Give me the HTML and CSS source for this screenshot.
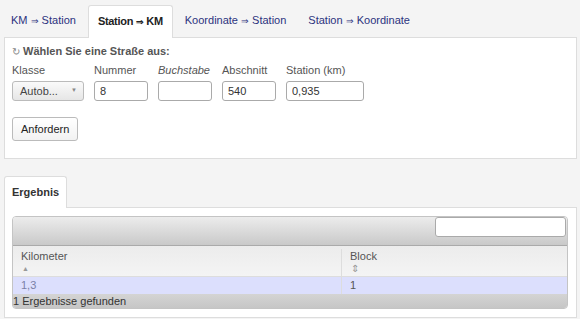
FILE: index.html
```html
<!doctype html>
<html lang="de">
<head>
    <meta charset="UTF-8">
    <title>Station / KM</title>
    <link rel="stylesheet" href="styles.css">
</head>
<body>
    <ul class="tabs top-tabs">
        <li class="tab"><a>KM <span class="arr">&rArr;</span> Station</a></li>
        <li class="tab active"><a>Station <span class="arr">&rArr;</span> KM</a></li>
        <li class="tab"><a>Koordinate <span class="arr">&rArr;</span> Station</a></li>
        <li class="tab"><a>Station <span class="arr">&rArr;</span> Koordinate</a></li>
    </ul>

    <div class="panel query">
        <div class="legend"><span class="refresh">&#x21BB;</span> Wählen Sie eine Straße aus:</div>
        <div class="fields">
            <label class="field">Klasse
                <span class="select"><span>Autob...</span><span class="caret">&#9660;</span></span></label>
            <label class="field">Nummer
                <input class="txt" type="text" value="8"></label>
            <label class="field"><i>Buchstabe</i>
                <input class="txt" type="text" value=""></label>
            <label class="field">Abschnitt
                <input class="txt" type="text" value="540"></label>
            <label class="field">Station (km)
                <input class="txt wide" type="text" value="0,935"></label>
        </div>
        <button class="btn">Anfordern</button>
    </div>

    <ul class="tabs result-tabs">
        <li class="tab active"><a>Ergebnis</a></li>
    </ul>

    <div class="panel result">
        <div class="grid">
            <div class="grid-toolbar">
                <input class="search" type="text">
            </div>
            <div class="grid-row head">
                <div class="cell">Kilometer<div class="sort">&#9650;</div></div>
                <div class="cell">Block<div class="sort both">&#8661;</div></div>
            </div>
            <div class="grid-row data">
                <div class="cell">1,3</div>
                <div class="cell">1</div>
            </div>
            <div class="grid-footer">1 Ergebnisse gefunden</div>
        </div>
    </div>
</body>
</html>
```

FILE: styles.css
```css
body {
    margin: 0;
    padding: 4px 3px 0 4px;
    background-color: #f4f4f4;
    color: #555;
    font: 11px/1.3 "Liberation Sans", Arial, sans-serif;
}

.tabs {
    list-style: none;
    margin: 0;
    padding: 0;
    display: flex;
}

.top-tabs {
    margin-left: -3px;
}

.tab {
    margin-right: 2px;
    border: 1px solid transparent;
    border-bottom: none;
    border-radius: 3px 3px 0 0;
}

.tab a {
    display: block;
    padding: 0 9px;
    line-height: 31px;
    color: #2b327e;
}

.arr {
    font-size: 9px;
}

.tab.active {
    background: #fff;
    border-color: #ddd;
    position: relative;
    top: 1px;
}

.tab.active a {
    color: #222;
    font-weight: bold;
    letter-spacing: -0.3px;
}

.panel {
    background: #fff;
    border: 1px solid #ddd;
}

.query {
    height: 109px;
    padding: 6px 7px 5px;
    margin-bottom: 16px;
}

.legend {
    font-weight: bold;
    color: #555;
    height: 16px;
}

.refresh {
    font-weight: normal;
    font-size: 10px;
    color: #888;
}

.fields {
    display: flex;
    margin-top: 3px;
}

.field {
    display: flex;
    flex-direction: column;
    gap: 4px;
    margin-right: 10px;
}

.txt {
    width: 54px;
    height: 20px;
    box-sizing: border-box;
    border: 1px solid #aaa;
    border-radius: 3px;
    padding: 0 5px;
    font: 11px "Liberation Sans", Arial, sans-serif;
    color: #333;
}

.txt.wide {
    width: 78px;
}

.select {
    width: 72px;
    height: 20px;
    box-sizing: border-box;
    border: 1px solid #bbb;
    border-radius: 3px;
    background: linear-gradient(#fafafa, #e6e6e6);
    display: flex;
    justify-content: space-between;
    align-items: center;
    padding: 0 6px 0 7px;
    color: #444;
}

.caret {
    font-size: 6px;
    color: #888;
}

.btn {
    margin-top: 16px;
    height: 24px;
    padding: 0 8px;
    border: 1px solid #bbb;
    border-radius: 3px;
    background: linear-gradient(#fff, #f2f2f2);
    font: 11px "Liberation Sans", Arial, sans-serif;
    color: #222;
}

.result-tabs .tab a {
    padding: 0 7px;
    letter-spacing: 0;
}

.result-tabs .tab.active a {
    color: #333;
}

.result {
    padding: 8px 8px 8px 7px;
}

.grid {
    border: 1px solid #c4c4c4;
    border-radius: 4px;
    overflow: hidden;
}

.grid-toolbar {
    height: 28px;
    background: linear-gradient(#ececec, #c9c9c9);
    display: flex;
    justify-content: flex-end;
    align-items: flex-start;
    border-bottom: 1px solid #aaa;
}

.search {
    width: 131px;
    height: 20px;
    box-sizing: border-box;
    margin: 0 1px 0 0;
    border: 1px solid #aaa;
    border-radius: 3px;
}

.grid-row {
    display: grid;
    grid-template-columns: 328px 1fr;
}

.grid-row .cell {
    padding: 0 8px;
}

.grid-row .cell + .cell {
    border-left: 1px solid #ddd;
}

.head {
    background: linear-gradient(#ececec, #f4f4f4);
    color: #555;
    height: 31px;
    padding-top: 3px;
    box-sizing: border-box;
    border-bottom: 1px solid #ddd;
}

.sort {
    font-size: 7px;
    color: #999;
    padding-left: 1px;
    line-height: 12px;
}

.sort.both {
    font-size: 10px;
}

.data {
    background: #dcdffd;
    color: #7a7fa6;
    line-height: 17px;
}

.data .cell + .cell {
    color: #555;
}

.grid-footer {
    background: linear-gradient(#d4d4d4, #c6c6c6);
    color: #333;
    line-height: 14px;
    font-size: 11px;
}
```
